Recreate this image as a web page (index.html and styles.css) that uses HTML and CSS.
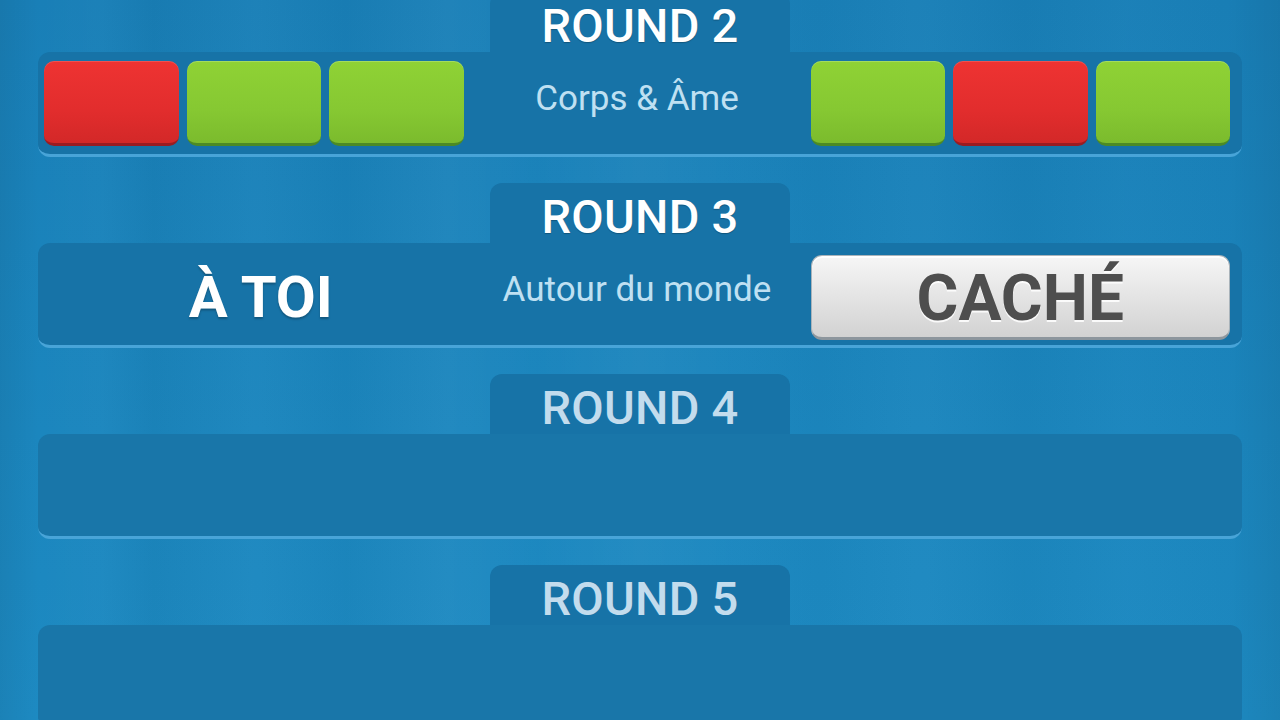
FILE: index.html
```html
<!DOCTYPE html>
<html lang="fr">
<head>
<meta charset="utf-8">
<title>Rounds</title>
<link rel="stylesheet" href="styles.css">
</head>
<body>
<main class="rounds">
  <section class="round">
    <div class="tab"><span class="tab-title">ROUND 2</span></div>
    <div class="panel">
      <div class="side">
        <div class="tile red"></div>
        <div class="tile green"></div>
        <div class="tile green"></div>
      </div>
      <div class="theme">Corps &amp; Âme</div>
      <div class="side">
        <div class="tile green"></div>
        <div class="tile red"></div>
        <div class="tile green"></div>
      </div>
    </div>
  </section>

  <section class="round">
    <div class="tab"><span class="tab-title">ROUND 3</span></div>
    <div class="panel">
      <div class="side side-center"><span class="your-turn">À TOI</span></div>
      <div class="theme">Autour du monde</div>
      <div class="side"><div class="hidden-btn">CACHÉ</div></div>
    </div>
  </section>

  <section class="round future">
    <div class="tab"><span class="tab-title">ROUND 4</span></div>
    <div class="panel"></div>
  </section>

  <section class="round future">
    <div class="tab"><span class="tab-title">ROUND 5</span></div>
    <div class="panel"></div>
  </section>
</main>
</body>
</html>
```

FILE: styles.css
```css
html, body {
  margin: 0;
  padding: 0;
  height: 100%;
  overflow: hidden;
}

body {
  font-family: Roboto, "Liberation Sans", Arial, sans-serif;
  background-color: #1b83bb;
  background-image:
    linear-gradient(90deg,
      rgba(0,0,0,0.06) 0%, rgba(0,0,0,0) 3%,
      rgba(255,255,255,0.015) 8%, rgba(0,0,0,0.03) 12%,
      rgba(255,255,255,0.02) 20%, rgba(0,0,0,0.025) 27%,
      rgba(255,255,255,0.03) 35%, rgba(255,255,255,0.005) 42%,
      rgba(255,255,255,0.035) 50%, rgba(255,255,255,0.01) 57%,
      rgba(0,0,0,0.015) 64%, rgba(255,255,255,0.02) 72%,
      rgba(0,0,0,0.025) 80%, rgba(255,255,255,0.01) 88%,
      rgba(0,0,0,0.01) 96%, rgba(0,0,0,0.07) 100%),
    linear-gradient(180deg, #197fb7 0%, #1b86be 60%, #1d8ac2 100%);
}

.rounds {
  display: flex;
  flex-direction: column;
  margin-top: -8px;
}

.round {
  display: flex;
  flex-direction: column;
  align-items: center;
  margin-bottom: 26px;
}

.tab {
  width: 300px;
  height: 60px;
  background: #1773a7;
  border-radius: 12px 12px 0 0;
  display: flex;
  align-items: center;
  justify-content: center;
  padding-top: 6px;
  box-sizing: border-box;
}

.tab-title {
  color: #ffffff;
  font-size: 47px;
  line-height: 1;
  font-weight: 500;
  letter-spacing: 0.3px;
  text-shadow: 0 1px 1px rgba(0,0,0,0.25);
}

.future .tab-title {
  color: #c3dced;
  text-shadow: none;
}

.panel {
  align-self: stretch;
  margin: 0 38px;
  height: 105px;
  box-sizing: border-box;
  padding: 0 12px 0 6px;
  background: #1773a7;
  border-radius: 12px;
  border-bottom: 3px solid #48a4d8;
  display: grid;
  grid-template-columns: 1fr 347px 1fr;
  align-items: center;
}

.future .panel {
  background: #1976a9;
}

.side {
  display: flex;
  gap: 8px;
  height: 85px;
}

.side-center {
  justify-content: center;
  align-items: center;
}

.tile {
  flex: 1;
  border-radius: 10px;
  box-sizing: border-box;
}

.tile.red {
  background: linear-gradient(180deg, #ee3332 0%, #e22d2d 60%, #d32828 100%);
  border-bottom: 3px solid #9a1c22;
  box-shadow: inset 0 1px 0 rgba(255,255,255,0.15);
}

.tile.green {
  background: linear-gradient(180deg, #8fd235 0%, #86c832 60%, #7bbb2d 100%);
  border-bottom: 3px solid #4c8a25;
  box-shadow: inset 0 1px 0 rgba(255,255,255,0.2);
}

.theme {
  color: #bfe0f2;
  font-size: 35px;
  text-align: center;
  margin-top: -10px;
}

.your-turn {
  color: #ffffff;
  font-size: 58px;
  font-weight: 700;
  margin-top: 6px;
  margin-left: 14px;
  text-shadow: 0 2px 2px rgba(0,0,0,0.25);
}

.hidden-btn {
  flex: 1;
  margin-top: 3px;
  height: 85px;
  box-sizing: border-box;
  border-radius: 11px;
  background: linear-gradient(180deg, #f6f6f6 0%, #e6e6e6 45%, #d2d2d2 100%);
  border: 1px solid #a9b3ba;
  border-bottom: 3px solid #8d969d;
  box-shadow: inset 0 2px 0 rgba(255,255,255,0.9);
  display: flex;
  align-items: center;
  justify-content: center;
  color: #4e4e4e;
  font-size: 64px;
  font-weight: 700;
  padding-top: 4px;
  text-shadow: 0 2px 0 rgba(255,255,255,0.85);
}
```
